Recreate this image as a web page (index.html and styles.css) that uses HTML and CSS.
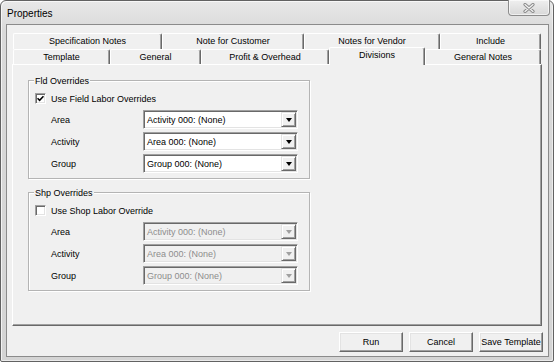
FILE: index.html
```html
<!DOCTYPE html>
<html>
<head>
<meta charset="utf-8">
<title>Properties</title>
<link rel="stylesheet" href="styles.css">
</head>
<body>
<div class="window">
  <div class="titlebar">
    <span class="title">Properties</span>
    <div class="close">
      <svg width="12" height="10" viewBox="0 0 12 10">
        <path d="M2 1.5 L10 8.5 M10 1.5 L2 8.5" stroke="#8a8a8a" stroke-width="3.2" stroke-linecap="round" fill="none"/>
        <path d="M2 1.5 L10 8.5 M10 1.5 L2 8.5" stroke="#f4f4f4" stroke-width="1.2" stroke-linecap="round" fill="none"/>
      </svg>
    </div>
  </div>
  <div class="client">
    <div class="tabs">
      <div class="tabrow">
        <div class="tab w-spec">Specification Notes</div>
        <div class="tab w-cust">Note for Customer</div>
        <div class="tab w-vend">Notes for Vendor</div>
        <div class="tab w-incl">Include</div>
      </div>
      <div class="tabrow">
        <div class="tab w-tmpl">Template</div>
        <div class="tab w-gen">General</div>
        <div class="tab w-prof">Profit &amp; Overhead</div>
        <div class="tab w-div selected">Divisions</div>
        <div class="tab w-gnotes">General Notes</div>
      </div>
    </div>
    <div class="pane">
      <div class="group">
        <div class="legend">Fld Overrides</div>
        <div class="check">
          <span class="box"><svg width="7" height="7" viewBox="0 0 7 7"><path d="M0.5 3.2 L2.6 5.3 L6.5 1.2" stroke="#000" stroke-width="1.6" fill="none"/></svg></span>
          <span>Use Field Labor Overrides</span>
        </div>
        <div class="row first">
          <span class="lbl">Area</span>
          <div class="combo"><span class="val">Activity 000: (None)</span><span class="drop"><span class="tri"></span></span></div>
        </div>
        <div class="row">
          <span class="lbl">Activity</span>
          <div class="combo"><span class="val">Area 000: (None)</span><span class="drop"><span class="tri"></span></span></div>
        </div>
        <div class="row">
          <span class="lbl">Group</span>
          <div class="combo"><span class="val">Group 000: (None)</span><span class="drop"><span class="tri"></span></span></div>
        </div>
      </div>
      <div class="group second">
        <div class="legend">Shp Overrides</div>
        <div class="check">
          <span class="box"></span>
          <span>Use Shop Labor Override</span>
        </div>
        <div class="row first">
          <span class="lbl">Area</span>
          <div class="combo disabled"><span class="val">Activity 000: (None)</span><span class="drop"><span class="tri"></span></span></div>
        </div>
        <div class="row">
          <span class="lbl">Activity</span>
          <div class="combo disabled"><span class="val">Area 000: (None)</span><span class="drop"><span class="tri"></span></span></div>
        </div>
        <div class="row">
          <span class="lbl">Group</span>
          <div class="combo disabled"><span class="val">Group 000: (None)</span><span class="drop"><span class="tri"></span></span></div>
        </div>
      </div>
    </div>
    <div class="buttons">
      <div class="button">Run</div>
      <div class="button">Cancel</div>
      <div class="button">Save Template</div>
    </div>
  </div>
</div>
</body>
</html>
```

FILE: styles.css
```css
* { box-sizing: border-box; }

body {
  margin: 0;
  width: 554px;
  height: 364px;
  overflow: hidden;
  background: #ffffff;
  font-family: "Liberation Sans", Arial, sans-serif;
  font-size: 9px;
  color: #000;
}

.window {
  width: 554px;
  height: 362px;
  border: 1px solid #626262;
  border-radius: 6px 6px 2px 2px;
  background: linear-gradient(#e8e8e8, #d9d9d9 30px, #d4d4d4);
  box-shadow: inset 1px 1px 0 rgba(255,255,255,0.7), inset -1px -1px 0 rgba(255,255,255,0.5);
  padding: 0 4px 4px 5px;
  display: flex;
  flex-direction: column;
}

.titlebar {
  height: 23px;
  display: flex;
  align-items: flex-start;
}

.title {
  font-size: 10px;
  line-height: 12px;
  margin-top: 7px;
  margin-left: 1px;
}

.close {
  margin-left: auto;
  margin-top: -1px;
  margin-right: -1px;
  width: 42px;
  height: 16px;
  border: 1px solid #8c8c8c;
  border-top: none;
  border-radius: 0 0 4px 4px;
  background: linear-gradient(#efefef, #d8d8d8);
  box-shadow: inset 0 0 0 1px rgba(255,255,255,0.6);
  display: flex;
  align-items: center;
  justify-content: center;
}

.client {
  flex: 1;
  background: #f0f0f0;
  border: 1px solid #8b8b8b;
  display: flex;
  flex-direction: column;
  padding: 8px 0 0 5px;
}

.tabs {
  width: 530px;
  padding-left: 1px;
  display: flex;
  flex-direction: column;
}

.tabrow {
  display: flex;
  height: 16px;
}

.tabrow + .tabrow {
  height: 15px;
}

.tab {
  border-top: 1px solid #fff;
  border-left: 1px solid #fff;
  border-right: 1px solid #696969;
  box-shadow: inset -1px 0 0 #a0a0a0;
  border-radius: 2px 2px 0 0;
  text-align: center;
  line-height: 14px;
  white-space: nowrap;
  background: #f0f0f0;
}

.tab.selected {
  margin-top: -2px;
  height: 18px;
  position: relative;
  z-index: 1;
}

.w-spec { width: 149px; }
.w-cust { width: 142px; }
.w-vend { width: 136px; }
.w-incl { width: 101px; }
.w-tmpl { width: 97px; }
.w-gen { width: 91px; }
.w-prof { width: 128px; }
.w-div { width: 96px; }
.w-gnotes { width: 116px; }

.pane {
  width: 530px;
  height: 262px;
  border: 1px solid;
  border-color: #fff #696969 #696969 #fff;
  box-shadow: inset -1px -1px 0 #a0a0a0;
  display: flex;
  flex-direction: column;
}

.group {
  width: 282px;
  height: 99px;
  margin: 15px 0 0 15px;
  border: 1px solid #b4b4b4;
  box-shadow: inset 1px 1px 0 #fff, 1px 1px 0 #fff;
}

.group.second {
  margin-top: 13px;
}

.legend {
  width: fit-content;
  margin: -6px 0 0 5px;
  padding: 0 1px;
  line-height: 12px;
  background: #f0f0f0;
}

.check {
  display: flex;
  align-items: center;
  gap: 5px;
  height: 11px;
  margin: 6px 0 0 6px;
}

.box {
  width: 11px;
  height: 11px;
  border: 1px solid;
  border-color: #a0a0a0 #fff #fff #a0a0a0;
  box-shadow: inset 1px 1px 0 #696969, inset -1px -1px 0 #e3e3e3;
  background: #fff;
  display: flex;
  align-items: center;
  justify-content: center;
}

.row {
  display: flex;
  align-items: center;
  height: 19px;
  margin-top: 3px;
  padding-left: 22px;
}

.row.first {
  margin-top: 6px;
}

.lbl {
  width: 92px;
}

.combo {
  width: 155px;
  height: 19px;
  border: 1px solid;
  border-color: #a0a0a0 #fff #fff #a0a0a0;
  box-shadow: inset 1px 1px 0 #696969, inset -1px -1px 0 #e3e3e3;
  background: #fff;
  display: flex;
  align-items: center;
  padding: 1px 1px 1px 3px;
}

.val {
  flex: 1;
  white-space: nowrap;
}

.drop {
  width: 15px;
  height: 15px;
  border: 1px solid;
  border-color: #e3e3e3 #696969 #696969 #e3e3e3;
  box-shadow: inset 1px 1px 0 #fff, inset -1px -1px 0 #a0a0a0;
  background: #f0f0f0;
  display: flex;
  align-items: center;
  justify-content: center;
}

.tri {
  width: 0;
  height: 0;
  border-left: 3.5px solid transparent;
  border-right: 3.5px solid transparent;
  border-top: 4px solid #000;
  margin-top: 1px;
}

.combo.disabled {
  background: #f0f0f0;
  color: #8d8d8d;
}

.combo.disabled .tri {
  border-top-color: #a0a0a0;
}

.buttons {
  display: flex;
  justify-content: flex-end;
  gap: 6px;
  margin-top: 6px;
  padding-right: 5px;
}

.button {
  width: 64px;
  height: 20px;
  border: 1px solid;
  border-color: #fff #696969 #696969 #fff;
  box-shadow: inset -1px -1px 0 #a0a0a0, inset 1px 1px 0 #e3e3e3;
  background: #f0f0f0;
  display: flex;
  align-items: center;
  justify-content: center;
  white-space: nowrap;
}
```
